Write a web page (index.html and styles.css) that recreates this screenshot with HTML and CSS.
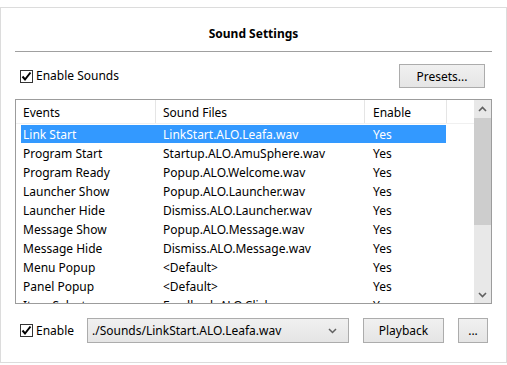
FILE: index.html
```html
<!DOCTYPE html>
<html lang="en">
<head>
  <meta charset="UTF-8">
  <meta name="viewport" content="width=device-width, initial-scale=1.0">
  <link rel="stylesheet" href="styles.css">
</head>
<body>
  <div class="dialog">
    <div class="title">Sound Settings</div>
    <div class="rule"></div>

    <div class="toolbar">
      <label class="check">
        <span class="box">
          <svg width="11" height="11" viewBox="0 0 11 11"><path d="M1.5 5.5 L4 8.5 L9.5 1.5" fill="none" stroke="#000" stroke-width="2"/></svg>
        </span>
        Enable Sounds
      </label>
      <button class="btn presets">Presets...</button>
    </div>

    <div class="list">
      <div class="list-body">
        <div class="list-head">
          <div class="col col-event">Events</div>
          <div class="col col-file">Sound Files</div>
          <div class="col col-enable">Enable</div>
        </div>
        <div class="rows" id="rows"></div>
      </div>
      <div class="scrollbar">
        <div class="arrow">
          <svg width="9" height="6" viewBox="0 0 9 6"><path d="M1 5 L4.5 1.5 L8 5" fill="none" stroke="#606060" stroke-width="1.6"/></svg>
        </div>
        <div class="track">
          <div class="thumb"></div>
        </div>
        <div class="arrow">
          <svg width="9" height="6" viewBox="0 0 9 6"><path d="M1 1 L4.5 4.5 L8 1" fill="none" stroke="#606060" stroke-width="1.6"/></svg>
        </div>
      </div>
    </div>

    <div class="footer">
      <label class="check enable">
        <span class="box">
          <svg width="11" height="11" viewBox="0 0 11 11"><path d="M1.5 5.5 L4 8.5 L9.5 1.5" fill="none" stroke="#000" stroke-width="2"/></svg>
        </span>
        Enable
      </label>
      <div class="combo">
        <span>./Sounds/LinkStart.ALO.Leafa.wav</span>
        <svg width="9" height="6" viewBox="0 0 9 6"><path d="M1 1 L4.5 4.5 L8 1" fill="none" stroke="#606060" stroke-width="1.5"/></svg>
      </div>
      <button class="btn playback">Playback</button>
      <button class="btn more">...</button>
    </div>
  </div>

  <script>
    const sounds = [
      ['Link Start', 'LinkStart.ALO.Leafa.wav', 'Yes'],
      ['Program Start', 'Startup.ALO.AmuSphere.wav', 'Yes'],
      ['Program Ready', 'Popup.ALO.Welcome.wav', 'Yes'],
      ['Launcher Show', 'Popup.ALO.Launcher.wav', 'Yes'],
      ['Launcher Hide', 'Dismiss.ALO.Launcher.wav', 'Yes'],
      ['Message Show', 'Popup.ALO.Message.wav', 'Yes'],
      ['Message Hide', 'Dismiss.ALO.Message.wav', 'Yes'],
      ['Menu Popup', '<Default>', 'Yes'],
      ['Panel Popup', '<Default>', 'Yes'],
      ['Item Select', 'Feedback.ALO.Click.wav', 'Yes']
    ];

    const esc = s => s.replace(/</g, '&lt;').replace(/>/g, '&gt;');

    document.getElementById('rows').innerHTML = sounds.map((s, i) => `
      <div class="row${i === 0 ? ' selected' : ''}">
        <div class="cell cell-event">${esc(s[0])}</div>
        <div class="cell cell-file">${esc(s[1])}</div>
        <div class="cell cell-enable">${esc(s[2])}</div>
      </div>`).join('');
  </script>
</body>
</html>
```

FILE: styles.css
```css
:root {
  --frame: #dcdcdc;
  --rule: #a0a0a0;
  --list-border: #9c9c9c;
  --btn-border: #acacac;
  --select: #3399ff;
  --text: #000;
}

body {
  margin: 0;
  font-family: 'Noto Sans', 'Open Sans', sans-serif;
  font-size: 12px;
  color: var(--text);
  background: #fff;
}

.dialog {
  box-sizing: border-box;
  width: 507px;
  height: 356px;
  margin-top: 7px;
  border: 1px solid var(--frame);
  padding: 0 14px 0 14px;
  display: flex;
  flex-direction: column;
}

.title {
  padding-top: 18px;
  padding-bottom: 9px;
  line-height: 16px;
  text-align: center;
  font-weight: bold;
}

.rule {
  height: 1px;
  background: var(--rule);
}

.toolbar {
  margin-top: 12px;
  height: 24px;
  padding: 0 7px 0 5px;
  display: flex;
  align-items: center;
  justify-content: space-between;
}

.check {
  display: flex;
  align-items: center;
  gap: 3px;
  line-height: 16px;
}

.box {
  box-sizing: border-box;
  width: 13px;
  height: 13px;
  border: 1px solid #333;
  background: #fff;
  display: flex;
  align-items: center;
  justify-content: center;
}

.btn {
  box-sizing: border-box;
  height: 100%;
  border: 1px solid var(--btn-border);
  background: linear-gradient(#f0f0f0, #e5e5e5);
  font-family: inherit;
  font-size: 12px;
  color: var(--text);
  padding: 0;
}

.presets {
  width: 86px;
}

/* list view */
.list {
  margin-top: 11px;
  height: 205px;
  box-sizing: border-box;
  border: 1px solid var(--list-border);
  display: flex;
  overflow: hidden;
}

.list-body {
  flex: 1;
  overflow: hidden;
}

.list-head {
  height: 24px;
  display: flex;
  padding-top: 2px;
  line-height: 21px;
  border-bottom: 1px solid #f0f0f0;
  box-sizing: border-box;
}

.col {
  box-sizing: border-box;
  padding-left: 7px;
  border-right: 1px solid #e5e5e5;
  margin-top: -2px;
  padding-top: 2px;
}

.col-event { width: 140px; }
.col-file { width: 209px; }
.col-enable { width: 82px; padding-left: 8px; }

.rows {
  padding-top: 1px;
}

.row {
  display: flex;
  box-sizing: border-box;
  height: 18px;
  padding-top: 2px;
  line-height: 16px;
  margin: 0 0 1px 5px;
  width: 425px;
  white-space: nowrap;
}

.row.selected {
  background: var(--select);
  color: #fff;
}

.cell-event { width: 135px; padding-left: 2px; box-sizing: border-box; }
.cell-file { width: 209px; padding-left: 7px; box-sizing: border-box; }
.cell-enable { padding-left: 8px; }

.scrollbar {
  width: 17px;
  background: #e8e8e8;
  display: flex;
  flex-direction: column;
}

.arrow {
  height: 17px;
  display: flex;
  align-items: center;
  justify-content: center;
}

.track {
  flex: 1;
}

.thumb {
  height: 107px;
  margin-top: 1px;
  background: #cdcdcd;
}

/* bottom row */
.footer {
  margin-top: 14px;
  height: 25px;
  padding-left: 5px;
  display: flex;
  align-items: center;
}

.enable {
  width: 67px;
}

.combo {
  box-sizing: border-box;
  width: 262px;
  height: 100%;
  border: 1px solid var(--btn-border);
  background: linear-gradient(#f0f0f0, #e5e5e5);
  display: flex;
  align-items: center;
  justify-content: space-between;
  padding: 0 11px 0 4px;
}

.playback {
  width: 81px;
  margin-left: 14px;
}

.more {
  width: 30px;
  margin-left: 14px;
}
```
